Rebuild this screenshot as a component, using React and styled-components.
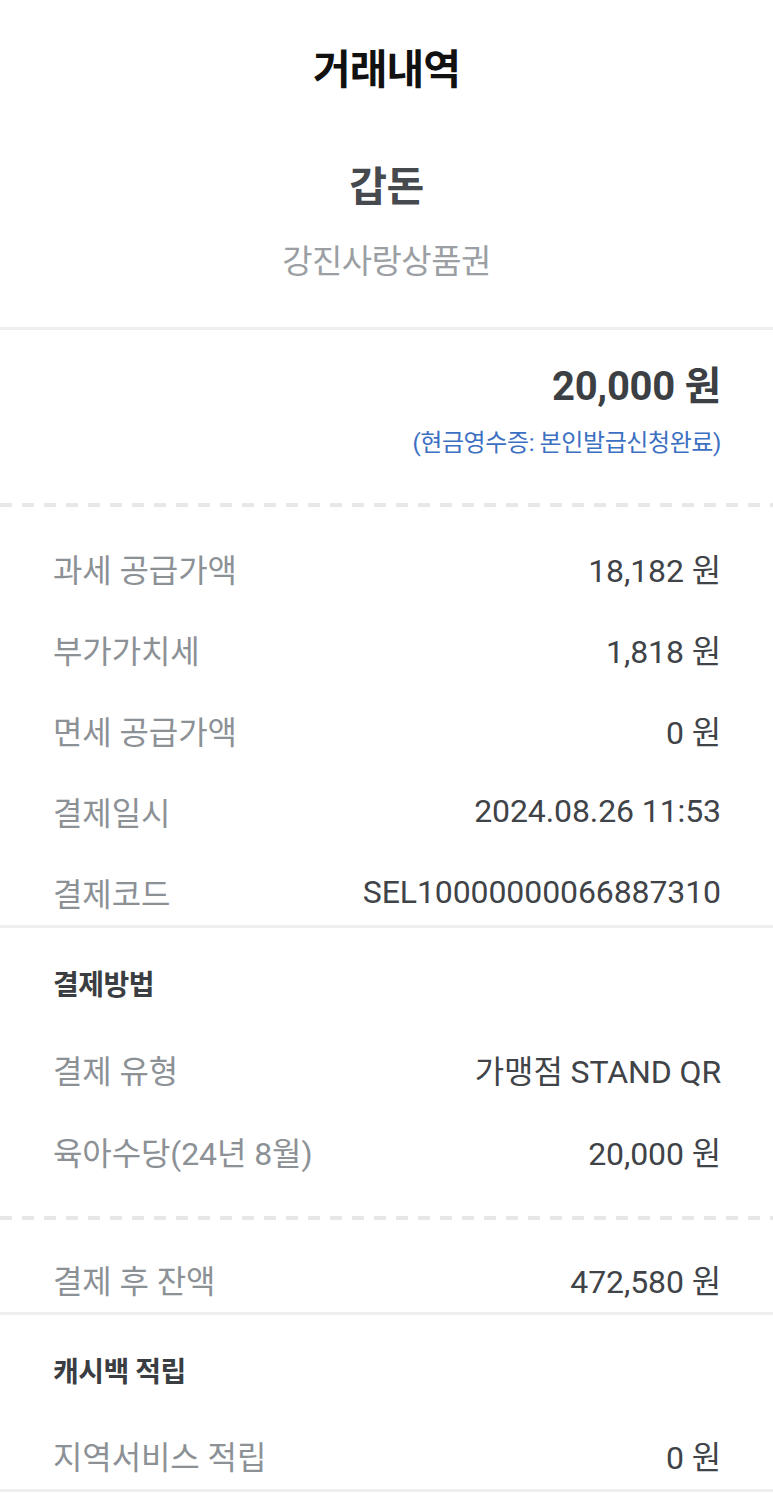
import React from "react";
import styled, { createGlobalStyle } from "styled-components";

const Global = createGlobalStyle`
  html, body { margin: 0; padding: 0; background: #ffffff; }
  body { font-family: Roboto, "Noto Sans CJK KR", sans-serif; }
`;

const Page = styled.div`
  width: 773px;
  background: #fff;
`;

const Header = styled.header`
  display: flex;
  flex-direction: column;
  align-items: center;
  padding: 45px 0 45px;
`;

const Title = styled.h1`
  margin: 0;
  font-size: 41px;
  line-height: 50px;
  font-weight: 700;
  color: #111;
  letter-spacing: -1px;
`;

const Merchant = styled.div`
  margin-top: 67px;
  font-size: 41px;
  line-height: 50px;
  font-weight: 700;
  color: #46494e;
  letter-spacing: -0.5px;
`;

const Voucher = styled.div`
  margin-top: 30px;
  font-size: 33px;
  line-height: 40px;
  color: #9b9fa4;
  letter-spacing: -0.6px;
`;

const Section = styled.section`
  border-top: ${(p) => (p.$line ? "3px solid #edeef0" : "none")};
  padding: ${(p) => p.$pad || "0"};
  display: flex;
  flex-direction: column;
  gap: ${(p) => p.$gap || "0"};
`;

const Dashed = styled.div`
  height: 4px;
  background: repeating-linear-gradient(
    to right,
    #e6e7e9 0,
    #e6e7e9 12px,
    transparent 12px,
    transparent 22px
  );
`;

const AmountBlock = styled.div`
  display: flex;
  flex-direction: column;
  align-items: flex-end;
  padding: 32px 52px 45px 53px;
`;

const Amount = styled.div`
  font-size: 40px;
  line-height: 50px;
  font-weight: 700;
  color: #3c3f43;
  letter-spacing: -0.3px;
`;

const Receipt = styled.div`
  margin-top: 16px;
  font-size: 24px;
  line-height: 30px;
  color: #3c70c2;
  letter-spacing: -0.4px;
`;

const Row = styled.div`
  display: flex;
  justify-content: space-between;
  align-items: center;
  padding: 0 52px 0 53px;
  height: 44px;
  margin-top: ${(p) => p.$mt || "0"};
  font-size: 32px;
  letter-spacing: -0.1px;
`;

const Label = styled.span`
  color: #8c9196;
`;

const Value = styled.span`
  color: #404347;
`;

const SectionTitle = styled.div`
  padding: 0 53px;
  height: 36px;
  line-height: 36px;
  font-size: 28px;
  font-weight: 700;
  color: #3a3d41;
  letter-spacing: -0.5px;
`;

const Item = ({ label, value, mt }) => (
  <Row $mt={mt}>
    <Label>{label}</Label>
    <Value>{value}</Value>
  </Row>
);

export default function App() {
  return (
    <Page>
      <Global />
      <Header>
        <Title>거래내역</Title>
        <Merchant>갑돈</Merchant>
        <Voucher>강진사랑상품권</Voucher>
      </Header>

      <Section $line>
        <AmountBlock>
          <Amount>20,000 원</Amount>
          <Receipt>(현금영수증: 본인발급신청완료)</Receipt>
        </AmountBlock>
      </Section>

      <Dashed />

      <Section $pad="39px 0 11px" $gap="37px">
        <Item label="과세 공급가액" value="18,182 원" />
        <Item label="부가가치세" value="1,818 원" />
        <Item label="면세 공급가액" value="0 원" />
        <Item label="결제일시" value="2024.08.26 11:53" />
        <Item label="결제코드" value="SEL10000000066887310" />
      </Section>

      <Section $line $pad="40px 0 43px">
        <SectionTitle>결제방법</SectionTitle>
        <Item mt="43px" label="결제 유형" value="가맹점 STAND QR" />
        <Item mt="38px" label="육아수당(24년 8월)" value="20,000 원" />
      </Section>

      <Dashed />

      <Section $pad="37px 0 11px">
        <Item label="결제 후 잔액" value="472,580 원" />
      </Section>

      <Section $line $pad="40px 0 12px" $gap="42px">
        <SectionTitle>캐시백 적립</SectionTitle>
        <Item label="지역서비스 적립" value="0 원" />
      </Section>
      <Section $line />
    </Page>
  );
}
